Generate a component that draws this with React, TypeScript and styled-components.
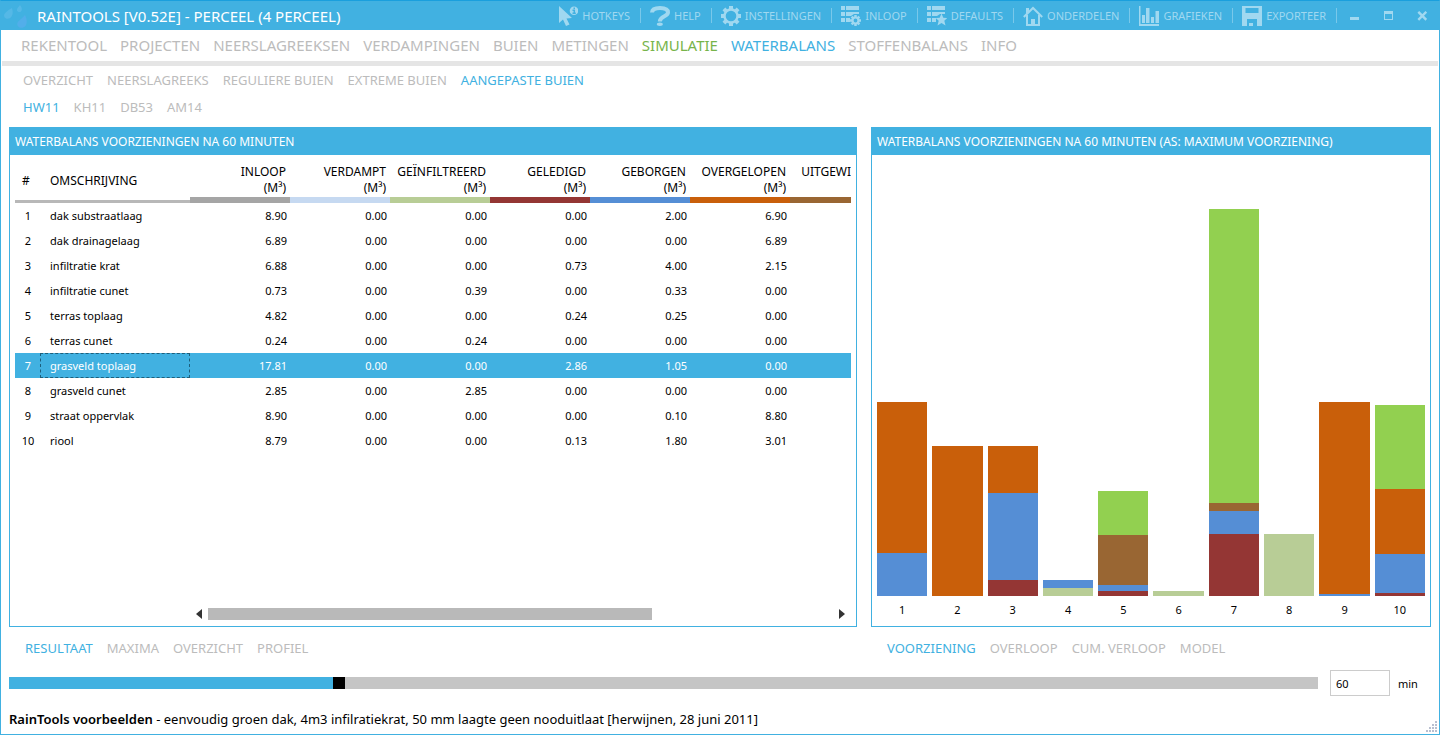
import React, { useState } from 'react';
import styled, { createGlobalStyle, css } from 'styled-components';

const blue = '#41b1e1';
const grey = '#bcbcbc';

const GlobalStyle = createGlobalStyle`
  *, *::before, *::after { box-sizing: border-box; }
  body { margin: 0; background: #fff; color: #000; }
  body, button, input { font-family: 'Noto Sans', 'Open Sans', sans-serif; }
`;

const Window = styled.div`
  display: flex;
  flex-direction: column;
  min-height: 100vh;
  border: 1px solid ${blue};
  border-top-color: #1a9fdd;
  position: relative;
`;

/* ---------- title bar ---------- */

const TitleBar = styled.header`
  display: flex;
  align-items: center;
  height: 29px;
  flex: none;
  background: ${blue};
  color: #fff;
`;

const Title = styled.h1`
  flex: 1;
  margin: 0 0 0 9px;
  font-size: 15px;
  font-weight: 400;
  line-height: 20px;
  white-space: nowrap;
`;

const Logo = styled.svg`
  width: 27px;
  height: 28px;
  flex: none;
`;

const Tools = styled.div`
  display: flex;
  align-items: center;
`;

const ToolButton = styled.button`
  display: flex;
  align-items: center;
  gap: 4px;
  height: 20px;
  padding: 0 10px 0 9px;
  border: 0;
  background: none;
  color: #a0d8f0;
  font-size: 11px;
  white-space: nowrap;
  svg { width: 20px; height: 20px; flex: none; }
`;

const Divider = styled.span`
  width: 1px;
  height: 15px;
  background: #79c8ea;
`;

const WindowButton = styled.button`
  display: grid;
  place-items: center;
  width: 34px;
  height: 28px;
  padding: 0;
  border: 0;
  background: none;
  svg { width: 10px; height: 10px; }
`;

/* ---------- navigation ---------- */

type Size = 'large' | 'medium';

const Nav = styled.nav<{ $size: Size }>`
  display: flex;
  white-space: nowrap;
  ${p => p.$size === 'large'
    ? css`gap: 13px; padding: 0 20px; font-size: 15px; line-height: 31px;`
    : css`gap: 14px; padding: 0 22px; font-size: 13px; line-height: 27px;`}
`;

const NavLink = styled.a<{ $color?: string }>`
  color: ${p => p.$color ?? grey};
  text-decoration: none;
`;

const Rule = styled.hr`
  width: calc(100% - 2px);
  height: 5px;
  margin: 0 1px 1px;
  border: 0;
  background: #e5e5e5;
`;

/* ---------- panels ---------- */

const Main = styled.main`
  flex: 1;
  display: grid;
  grid-template-columns: minmax(0, 848fr) minmax(0, 560fr);
  gap: 0 14px;
  padding: 6px 8px 0;
`;

const Column = styled.div`
  display: flex;
  flex-direction: column;
`;

const Panel = styled.section`
  flex: 1;
  display: flex;
  flex-direction: column;
  border: 1px solid ${blue};
`;

const PanelTitle = styled.h2`
  margin: 0;
  padding: 0 5px;
  background: ${blue};
  color: #fff;
  font-size: 12px;
  font-weight: 400;
  line-height: 27px;
  white-space: nowrap;
`;

const Tabs = styled.nav`
  display: flex;
  gap: 14px;
  padding: 0 16px;
  font-size: 13px;
  line-height: 43px;
  white-space: nowrap;
`;

/* ---------- table ---------- */

const TableView = styled.div`
  flex: 1;
  margin: 8px 5px 0;
  overflow: hidden;
`;

const Table = styled.table`
  width: 875px;
  table-layout: fixed;
  border-collapse: separate;
  border-spacing: 0;
  font-size: 11px;
  th, td { padding: 0; font-weight: 400; }
  th { font-size: 12px; }
`;

const HeadText = styled.th<{ $indent: number }>`
  height: 40px;
  border-bottom: 3px solid #b8b8b8;
  text-align: left;
  && { padding: 0 0 2px ${p => p.$indent}px; }
`;

const HeadValue = styled.th<{ $color: string }>`
  height: 40px;
  border-bottom: 6px solid ${p => p.$color};
  text-align: right;
  vertical-align: top;
  line-height: 16px;
  && { padding: 1px 4px 0 0; }
`;

const Row = styled.tr<{ $selected: boolean }>`
  height: 25px;
  ${p => p.$selected && css`background: ${blue}; color: #fff;`}
`;

const IndexCell = styled.td`
  text-align: center;
  && { padding-left: 1px; }
`;

const NameCell = styled.td<{ $focused: boolean }>`
  && { padding-left: 10px; }
  ${p => p.$focused && css`outline: 1px dashed #1d5f7c; outline-offset: -1px;`}
`;

const ValueCell = styled.td`
  text-align: right;
  && { padding-right: 3px; }
`;

const ScrollBar = styled.div`
  display: flex;
  align-items: center;
  gap: 6px;
  margin: 0 5px 6px 180px;
  height: 12px;
`;

const ScrollArrow = styled.button<{ $align: 'flex-start' | 'flex-end' }>`
  width: 12px;
  height: 12px;
  padding: 0;
  border: 0;
  background: none;
  display: flex;
  justify-content: ${p => p.$align};
  svg { width: 7px; height: 12px; }
`;

const ScrollTrack = styled.div`
  flex: 1;
  height: 12px;
`;

const ScrollThumb = styled.div`
  width: 71%;
  height: 12px;
  background: #b9b9b9;
`;

/* ---------- chart ---------- */

const Chart = styled.div`
  flex: 1;
  display: grid;
  grid-template-columns: repeat(10, minmax(0, 1fr));
  gap: 5px;
  padding: 6px 5px 0;
`;

const ChartColumn = styled.div`
  display: flex;
  flex-direction: column;
`;

const Bar = styled.div`
  flex: 1;
  display: flex;
  flex-direction: column;
  justify-content: flex-end;
`;

const Segment = styled.div<{ $color: string }>`
  flex: none;
  background: ${p => p.$color};
`;

const AxisLabel = styled.span`
  height: 30px;
  font-size: 11px;
  line-height: 28px;
  text-align: center;
`;

/* ---------- footer ---------- */

const TimeBar = styled.div`
  display: flex;
  align-items: center;
  height: 26px;
  padding: 0 8px;
  font-size: 11px;
`;

const Slider = styled.input<{ $percent: number }>`
  flex: 1;
  appearance: none;
  height: 12px;
  margin: 0;
  background: linear-gradient(to right, ${blue} ${p => p.$percent}%, #c5c5c5 ${p => p.$percent}%);
  &::-webkit-slider-thumb { appearance: none; width: 12px; height: 12px; background: #000; }
  &::-moz-range-thumb { width: 12px; height: 12px; border: 0; border-radius: 0; background: #000; }
`;

const MinuteLabel = styled.label`
  width: 101px;
  display: flex;
  align-items: center;
  gap: 8px;
  margin-left: 12px;
`;

const MinuteInput = styled.input`
  width: 60px;
  height: 26px;
  padding: 0 5px;
  border: 1px solid #ccc;
  font-size: 11px;
`;

const Status = styled.footer`
  padding: 8px 8px 0;
  height: 38px;
  font-size: 13px;
  line-height: 30px;
  white-space: nowrap;
  strong { font-weight: 600; }
`;

const Grip = styled.svg`
  position: absolute;
  right: 1px;
  bottom: 1px;
  width: 12px;
  height: 12px;
`;

/* ---------- icons ---------- */

const light = '#a0d8f0';

const teeth = (cx: number, cy: number, r: number, w: number, h: number, fill: string) =>
  [0, 45, 90, 135, 180, 225, 270, 315].map(a => (
    <rect key={a} x={cx - w / 2} y={cy - r} width={w} height={h} fill={fill} transform={`rotate(${a} ${cx} ${cy})`} />
  ));

const ListRows = () => (
  <path fill={light} d="M0 0h4v4H0zM5 0h13v4H5zM0 6h4v4H0zM5 6h13v2h-5l-3 2H5zM0 12h4v4H0zM5 12h4v4H5z" />
);

const icons: Record<string, React.ReactNode> = {
  HOTKEYS: (
    <>
      <path fill={light} d="M1 0v17l4-3.500 3 6.500 3.500-1.500-3-6 5.500-.5z" />
      <circle cx="16" cy="4.700" r="4.300" fill={light} />
      <path stroke={blue} strokeWidth="1.500" fill="none" d="M14.500 4.200h1.800v3M14.500 7.200h3.300M15.500 2.200h1.500" />
    </>
  ),
  HELP: (
    <>
      <path fill="none" stroke={light} strokeWidth="4" d="M2 6.500C2.200 3 6 2 10 2c5 0 8 1.500 8 4.500C18 10.500 9.800 10 9.800 15.500" />
      <ellipse cx="9.800" cy="18.300" rx="3" ry="1.700" fill={light} />
    </>
  ),
  INSTELLINGEN: (
    <>
      <circle cx="10" cy="10" r="6.500" fill="none" stroke={light} strokeWidth="2.400" />
      {teeth(10, 10, 10, 4, 3, light)}
    </>
  ),
  INLOOP: (
    <>
      <ListRows />
      {teeth(14.500, 14.500, 5.500, 2.500, 3, light)}
      <circle cx="14.500" cy="14.500" r="3" fill="none" stroke={light} strokeWidth="2.200" />
    </>
  ),
  DEFAULTS: (
    <>
      <ListRows />
      <path fill={light} d="M14.500 7.500l1.800 4.200 4 .3-3 2.800 1.200 4.700-4-2.500-4 2.500 1.200-4.700-3-2.800 4-.3z" />
    </>
  ),
  ONDERDELEN: (
    <>
      <path fill="none" stroke={light} strokeWidth="2" d="M.8 11L10 2l9.200 9" />
      <path fill={light} d="M3 2h3v3.500L3 8z" />
      <path fill="none" stroke={light} strokeWidth="2" d="M4 9v10h12V9" />
      <path fill={light} d="M8 13h4v7H8z" />
    </>
  ),
  GRAFIEKEN: (
    <path fill={light} d="M0 0h1.500v18H20v2H0zM3 9h3v8H3zM7 2h3.500v15H7zM12 11h3v6h-3zM16.500 5H20v12h-3.500z" />
  ),
  EXPORTEER: (
    <path fill={light} fillRule="evenodd" d="M0 0h20v20H0zM3.500 2v5h13V2zM5 13v7h2v-3h4v3h4v-7z" />
  ),
};

/* ---------- data ---------- */

const series = [
  { label: 'INLOOP', color: '#a5a5a5' },
  { label: 'VERDAMPT', color: '#c6d9f1' },
  { label: 'GEÏNFILTREERD', color: '#b8cd96' },
  { label: 'GELEDIGD', color: '#943634' },
  { label: 'GEBORGEN', color: '#558ed5' },
  { label: 'OVERGELOPEN', color: '#c95f0a' },
  { label: 'UITGEWISSELD', color: '#996633' },
];

const columnsInView = 6;

const rest = '#92d050';
const axisMaximum = 20;

const facilities = [
  { name: 'dak substraatlaag', values: [8.9, 0, 0, 0, 2, 6.9, 0] },
  { name: 'dak drainagelaag', values: [6.89, 0, 0, 0, 0, 6.89, 0] },
  { name: 'infiltratie krat', values: [6.88, 0, 0, 0.73, 4, 2.15, 0] },
  { name: 'infiltratie cunet', values: [0.73, 0, 0.39, 0, 0.33, 0, 0] },
  { name: 'terras toplaag', values: [4.82, 0, 0, 0.24, 0.25, 0, 2.3] },
  { name: 'terras cunet', values: [0.24, 0, 0.24, 0, 0, 0, 0] },
  { name: 'grasveld toplaag', values: [17.81, 0, 0, 2.86, 1.05, 0, 0.37] },
  { name: 'grasveld cunet', values: [2.85, 0, 2.85, 0, 0, 0, 0] },
  { name: 'straat oppervlak', values: [8.9, 0, 0, 0, 0.1, 8.8, 0] },
  { name: 'riool', values: [8.79, 0, 0, 0.13, 1.8, 3.01, 0] },
];

const stack = (values: number[]) => {
  const parts = series.slice(1).map((s, i) => ({ color: s.color, value: values[i + 1] }));
  const used = parts.reduce((sum, p) => sum + p.value, 0);
  const remainder = values[0] - used;
  if (remainder > 0.05) parts.push({ color: rest, value: remainder });
  return parts.filter(p => p.value > 0).reverse();
};

type Item = { label: string; color?: string };

const mainItems: Item[] = [
  { label: 'REKENTOOL' }, { label: 'PROJECTEN' }, { label: 'NEERSLAGREEKSEN' }, { label: 'VERDAMPINGEN' },
  { label: 'BUIEN' }, { label: 'METINGEN' }, { label: 'SIMULATIE', color: '#77b44b' },
  { label: 'WATERBALANS', color: blue }, { label: 'STOFFENBALANS' }, { label: 'INFO' },
];
const subItems: Item[] = [
  { label: 'OVERZICHT' }, { label: 'NEERSLAGREEKS' }, { label: 'REGULIERE BUIEN' }, { label: 'EXTREME BUIEN' },
  { label: 'AANGEPASTE BUIEN', color: blue },
];
const stormItems: Item[] = [{ label: 'HW11', color: blue }, { label: 'KH11' }, { label: 'DB53' }, { label: 'AM14' }];
const resultItems: Item[] = [
  { label: 'RESULTAAT', color: blue }, { label: 'MAXIMA' }, { label: 'OVERZICHT' }, { label: 'PROFIEL' },
];
const chartItems: Item[] = [
  { label: 'VOORZIENING', color: blue }, { label: 'OVERLOOP' }, { label: 'CUM. VERLOOP' }, { label: 'MODEL' },
];

const Links = ({ items }: { items: Item[] }) => (
  <>
    {items.map(i => (
      <NavLink key={i.label} href="#" $color={i.color}>{i.label}</NavLink>
    ))}
  </>
);

const gripDots = [[9, 0], [6, 3], [9, 3], [3, 6], [6, 6], [9, 6], [0, 9], [3, 9], [6, 9], [9, 9]];

export default function App() {
  const [minutes, setMinutes] = useState(60);
  const [selected, setSelected] = useState(6);

  return (
    <Window>
      <GlobalStyle />
      <TitleBar>
        <Logo viewBox="0 0 27 28" aria-hidden="true">
          <path fill="#55b8e6" d="M11 6c1 4 1 6-.5 8.500-1.500 2.500-5 3-6.800 1C1.500 12.500 5 9.500 11 6z" />
          <path fill="#55b8e6" d="M19 3c2 2 2.500 5 1 6.500-1.500 1-3.500.5-4-1-.4-2 1.500-3.500 3-5.500z" />
          <path fill="#52aeea" d="M24 13c2 4 2.500 8 .5 11-2 2.500-6.500 2.500-8-.5-1.500-4 4-6 7.500-10.500z" />
        </Logo>
        <Title>RAINTOOLS [V0.52E] - PERCEEL (4 PERCEEL)</Title>
        <Tools>
          {Object.entries(icons).map(([label, icon]) => (
            <React.Fragment key={label}>
              <ToolButton type="button">
                <svg viewBox="0 0 20 20" aria-hidden="true">{icon}</svg>
                {label}
              </ToolButton>
              <Divider />
            </React.Fragment>
          ))}
          <WindowButton type="button" aria-label="Minimaliseren">
            <svg viewBox="0 0 10 10"><path fill={light} d="M1 6h9v3H1z" /></svg>
          </WindowButton>
          <WindowButton type="button" aria-label="Maximaliseren">
            <svg viewBox="0 0 10 10"><path fill={light} fillRule="evenodd" d="M1 0h9v9H1zM2 3v5h7V3z" /></svg>
          </WindowButton>
          <WindowButton type="button" aria-label="Sluiten">
            <svg viewBox="0 0 10 10"><path stroke={light} strokeWidth="2.400" d="M1.300.8l8 8M9.300.8l-8 8" /></svg>
          </WindowButton>
        </Tools>
      </TitleBar>

      <Nav $size="large"><Links items={mainItems} /></Nav>
      <Rule />
      <Nav $size="medium"><Links items={subItems} /></Nav>
      <Nav $size="medium"><Links items={stormItems} /></Nav>

      <Main>
        <Column>
          <Panel>
            <PanelTitle>WATERBALANS VOORZIENINGEN NA 60 MINUTEN</PanelTitle>
            <TableView>
              <Table>
                <colgroup>
                  <col style={{ width: 25 }} />
                  <col style={{ width: 150 }} />
                  {series.map(s => <col key={s.label} style={{ width: 100 }} />)}
                </colgroup>
                <thead>
                  <tr>
                    <HeadText $indent={7}>#</HeadText>
                    <HeadText $indent={10}>OMSCHRIJVING</HeadText>
                    {series.map((s, i) => (
                      <HeadValue key={s.label} $color={s.color}>
                        {s.label}
                        {i < columnsInView && <><br />(M³)</>}
                      </HeadValue>
                    ))}
                  </tr>
                </thead>
                <tbody>
                  {facilities.map((f, i) => (
                    <Row key={f.name} $selected={i === selected} onClick={() => setSelected(i)}>
                      <IndexCell>{i + 1}</IndexCell>
                      <NameCell $focused={i === selected}>{f.name}</NameCell>
                      {f.values.map((v, j) => <ValueCell key={j}>{j < columnsInView && v.toFixed(2)}</ValueCell>)}
                    </Row>
                  ))}
                </tbody>
              </Table>
            </TableView>
            <ScrollBar>
              <ScrollArrow type="button" aria-label="Naar links" $align="flex-end">
                <svg viewBox="0 0 7 12"><path fill="#333" d="M7 1v10L1 6z" /></svg>
              </ScrollArrow>
              <ScrollTrack><ScrollThumb /></ScrollTrack>
              <ScrollArrow type="button" aria-label="Naar rechts" $align="flex-start">
                <svg viewBox="0 0 7 12"><path fill="#333" d="M0 1v10l6-5z" /></svg>
              </ScrollArrow>
            </ScrollBar>
          </Panel>
          <Tabs><Links items={resultItems} /></Tabs>
        </Column>

        <Column>
          <Panel>
            <PanelTitle>WATERBALANS VOORZIENINGEN NA 60 MINUTEN (AS: MAXIMUM VOORZIENING)</PanelTitle>
            <Chart>
              {facilities.map((f, i) => (
                <ChartColumn key={f.name}>
                  <Bar>
                    {stack(f.values).map(p => (
                      <Segment key={p.color} $color={p.color} style={{ height: `${(p.value / axisMaximum) * 100}%` }} />
                    ))}
                  </Bar>
                  <AxisLabel>{i + 1}</AxisLabel>
                </ChartColumn>
              ))}
            </Chart>
          </Panel>
          <Tabs><Links items={chartItems} /></Tabs>
        </Column>
      </Main>

      <TimeBar>
        <Slider
          type="range"
          aria-label="Tijd"
          min={0}
          max={240}
          value={minutes}
          $percent={(minutes / 240) * 100}
          onChange={e => setMinutes(Number(e.target.value))}
        />
        <MinuteLabel>
          <MinuteInput type="text" value={minutes} onChange={e => setMinutes(Number(e.target.value) || 0)} />
          min
        </MinuteLabel>
      </TimeBar>
      <Status>
        <strong>RainTools voorbeelden</strong> - eenvoudig groen dak, 4m3 infilratiekrat, 50 mm laagte geen nooduitlaat [herwijnen, 28 juni 2011]
      </Status>
      <Grip viewBox="0 0 12 12" aria-hidden="true">
        {gripDots.map(([x, y]) => <rect key={`${x}-${y}`} x={x} y={y} width="2" height="2" fill="#b8bfd0" />)}
      </Grip>
    </Window>
  );
}
